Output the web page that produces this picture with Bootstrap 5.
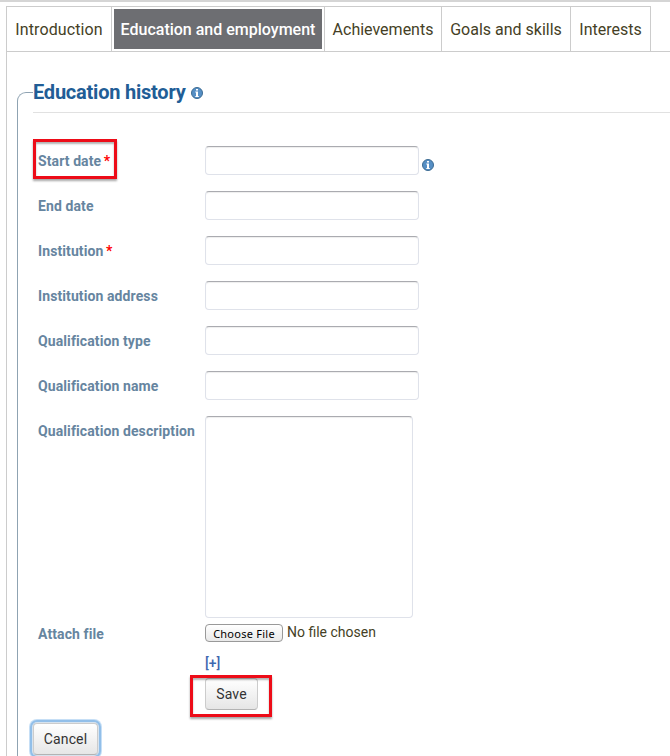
<!DOCTYPE html>
<html lang="en">
<head>
<meta charset="utf-8">
<meta name="viewport" content="width=device-width, initial-scale=1">
<title>Education and employment</title>
<link href="https://cdn.jsdelivr.net/npm/bootstrap@5.3.0/dist/css/bootstrap.min.css" rel="stylesheet">
<style>
html,body{height:100%}
body{font-family:Roboto,"Liberation Sans",sans-serif;font-size:14px;line-height:20px;color:#453f26;border-top:2px solid #d5d5d5;background:#fff}
.page{height:754px;padding:4px 0 0 6px}
.profile-tabs{border-bottom:1px solid #ccc;height:46px;flex:none}
.profile-tabs .nav-link{height:46px;border:1px solid #ccc;border-left-width:0;border-bottom:0;border-radius:0;color:#453f26;font-size:16px;line-height:20px;padding:13px 0 0;text-align:center;white-space:nowrap}
.profile-tabs .nav-item:first-child .nav-link{border-left-width:1px;letter-spacing:.12px}
.profile-tabs .nav-link.active{background:#6d6e72;background-clip:content-box;padding:2px 2px 3px 2px;color:#fff;font-weight:500;line-height:41px;border-color:#ccc}
.tab-intro{width:106px}.tab-edu{width:213px}.tab-ach{width:117px}.tab-goals{width:129px}.tab-int{width:80px}
.tab-body{border-left:1px solid #ccc;padding:40px 0 0 10px}
.frame{border-left:1px solid transparent;padding-left:15px;position:relative}
.frame::before{content:"";position:absolute;left:-1px;top:0;width:16px;height:12px;border:solid #8fa3b2;border-width:1px 0 0 1px;border-radius:9px 0 0 0}
.frame::after{content:"";position:absolute;left:-1px;top:12px;bottom:0;width:1px;background:#8fa3b2}
.heading{font-size:20px;line-height:26px;font-weight:700;letter-spacing:-.22px;color:#215d96;margin-top:-13px;height:34px;border-bottom:1px solid #e1e1e1}
.heading-icon{margin:8px 0 0 5px}
.fields{padding-top:33px}
.form-line{height:45px}
.lbl{width:172px;padding-left:5px;padding-top:5px;font-weight:700;letter-spacing:.1px;color:#6685a0;flex:none;white-space:nowrap}
.req{color:#f00;margin-left:-1px}
.field.form-control{width:214px;height:29px;min-height:0;padding:2px 6px;border:1px solid #dfe2ea;border-top-color:#aaabb0;border-radius:4px;box-shadow:inset 0 1px 1px #eee;font-size:14px}
.field.form-control.area{width:208px;height:202px;resize:none}
.line-area{height:203px}
.marked{position:absolute;border:3px solid #ed0c18;box-shadow:0 2px 2px rgba(0,0,0,.35),inset 0 2px 2px rgba(0,0,0,.3);pointer-events:none}
.mark-start{left:0;top:-7px;width:84px;height:40px}
.mark-save{left:-15px;top:-3px;width:82px;height:42px}
.help{margin:13px 0 0 3px}
.choose{width:78px;height:18px;border:1px solid #999;border-radius:4px;background:linear-gradient(#fff,#f4f4f4 50%,#e9e9e9);color:#000;font:11px/17px "Noto Sans",sans-serif;letter-spacing:.25px;padding:0;margin-top:5px}
.act{font-size:14px;line-height:20px;color:#333;border:1px solid #ccc;border-bottom-color:#b3b3b3;border-radius:4px;background:linear-gradient(#fff,#e6e6e6);padding:0;letter-spacing:.15px}
.save{width:53px;height:32px;padding-bottom:1px}
.cancel{width:65px;height:32px;box-shadow:0 0 0 1px #d7e3ee,0 0 0 3px #92bfe9,0 0 0 4px #c6dff6}
.more{color:#3f68b0;text-decoration:none;line-height:20px;font-weight:500}
.file-line{height:34px}
.nofile{margin:3px 0 0 4px}
.more-line{height:25px}
.save-line{height:45px}
</style>
</head>
<body class="overflow-hidden">
<svg class="d-none"><symbol id="info" viewBox="0 0 12 12"><circle cx="6" cy="6" r="5.5" fill="#568fc5" stroke="#3d6b92"/><path d="M5 2h2v1.5H5zM4.3 4.5H7V9h.8v1H4.3V9H5V5.5h-.7z" fill="#fff"/></symbol></svg>
<div class="page d-flex flex-column">
<ul class="nav nav-tabs profile-tabs flex-nowrap">
<li class="nav-item"><a class="nav-link tab-intro" href="#">Introduction</a></li>
<li class="nav-item"><a class="nav-link active tab-edu" href="#">Education and employment</a></li>
<li class="nav-item"><a class="nav-link tab-ach" href="#">Achievements</a></li>
<li class="nav-item"><a class="nav-link tab-goals" href="#">Goals and skills</a></li>
<li class="nav-item"><a class="nav-link tab-int" href="#">Interests</a></li>
</ul>
<main class="tab-body flex-grow-1 d-flex">
<form class="frame flex-grow-1">
<h2 class="heading mb-0 d-flex"><span>Education history</span><svg class="heading-icon" width="12" height="12"><use href="#info"/></svg></h2>
<div class="fields">
<div class="form-line d-flex position-relative"><label class="lbl" for="start">Start date <span class="req">*</span></label><input class="form-control field" id="start"><svg class="help" width="12" height="12"><use href="#info"/></svg><span class="marked mark-start"></span></div>
<div class="form-line d-flex"><label class="lbl" for="end">End date</label><input class="form-control field" id="end"></div>
<div class="form-line d-flex"><label class="lbl" for="inst">Institution <span class="req">*</span></label><input class="form-control field" id="inst"></div>
<div class="form-line d-flex"><label class="lbl" for="addr">Institution address</label><input class="form-control field" id="addr"></div>
<div class="form-line d-flex"><label class="lbl" for="type">Qualification type</label><input class="form-control field" id="type"></div>
<div class="form-line d-flex"><label class="lbl" for="qname">Qualification name</label><input class="form-control field" id="qname"></div>
<div class="line-area d-flex"><label class="lbl" for="desc">Qualification description</label><textarea class="form-control field area" id="desc"></textarea></div>
<div class="file-line d-flex"><span class="lbl">Attach file</span><button class="choose" type="button">Choose File</button><span class="nofile">No file chosen</span></div>
<div class="more-line d-flex"><span class="lbl"></span><a class="more" href="#">[+]</a></div>
<div class="save-line d-flex"><span class="lbl"></span><div class="position-relative"><button class="btn act save d-block" type="button">Save</button><span class="marked mark-save"></span></div></div>
<button class="btn act cancel d-block" type="button">Cancel</button>
</div>
</form>
</main>
</div>
<script src="https://cdn.jsdelivr.net/npm/bootstrap@5.3.0/dist/js/bootstrap.bundle.min.js"></script>
</body>
</html>
